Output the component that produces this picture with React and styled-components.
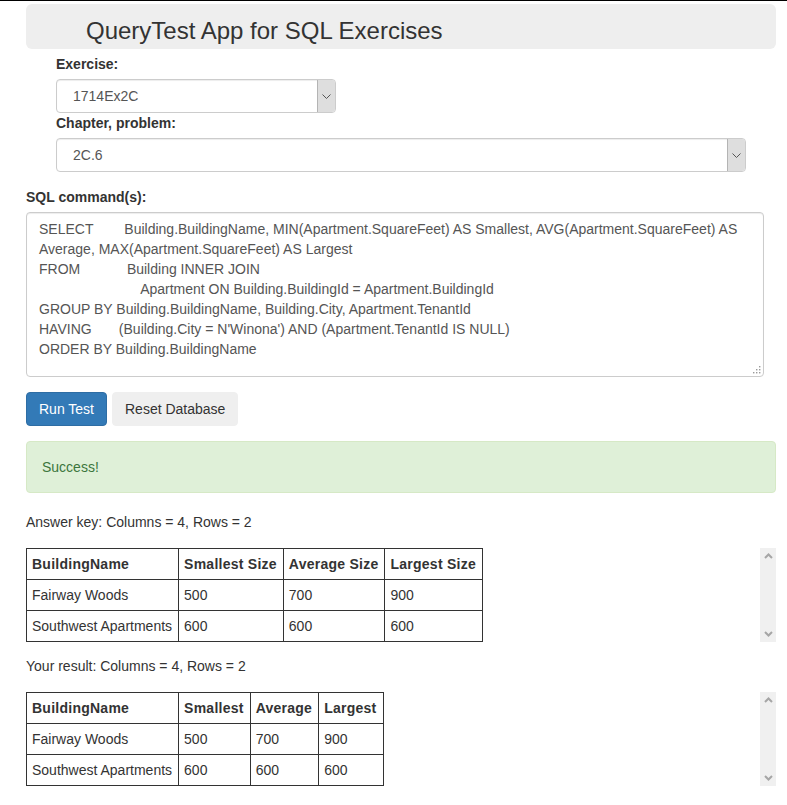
import React from "react";
import styled, { createGlobalStyle } from "styled-components";

const GlobalStyle = createGlobalStyle`
  html, body {
    margin: 0;
    padding: 0;
    background: #fff;
  }
  body {
    font-family: "Liberation Sans", Arial, sans-serif;
    font-size: 14px;
    line-height: 20px;
    color: #333;
    border-top: 1px solid #000;
  }
`;

const sql = `SELECT        Building.BuildingName, MIN(Apartment.SquareFeet) AS Smallest, AVG(Apartment.SquareFeet) AS Average, MAX(Apartment.SquareFeet) AS Largest
FROM            Building INNER JOIN
                          Apartment ON Building.BuildingId = Apartment.BuildingId
GROUP BY Building.BuildingName, Building.City, Apartment.TenantId
HAVING       (Building.City = N'Winona') AND (Apartment.TenantId IS NULL)
ORDER BY Building.BuildingName`;

const answerKey = {
  columns: ["BuildingName", "Smallest Size", "Average Size", "Largest Size"],
  rows: [
    ["Fairway Woods", "500", "700", "900"],
    ["Southwest Apartments", "600", "600", "600"],
  ],
};

const yourResult = {
  columns: ["BuildingName", "Smallest", "Average", "Largest"],
  rows: [
    ["Fairway Woods", "500", "700", "900"],
    ["Southwest Apartments", "600", "600", "600"],
  ],
};

function Chevron({ up }) {
  return (
    <svg width="9" height="6" viewBox="0 0 9 6">
      <polyline
        points={up ? "1,5 4.5,1.5 8,5" : "1,1 4.5,4.5 8,1"}
        fill="none"
        stroke="#a6a6a6"
        strokeWidth="2"
      />
    </svg>
  );
}

function Select({ value, width }) {
  return (
    <SelectBox $width={width}>
      <SelectValue>{value}</SelectValue>
      <ArrowBox>
        <svg width="9" height="5" viewBox="0 0 9 5">
          <polyline points="0.5,0.5 4.5,4.5 8.5,0.5" fill="none" stroke="#555" strokeWidth="1" />
        </svg>
      </ArrowBox>
    </SelectBox>
  );
}

function ResultTable({ data }) {
  return (
    <TableScroll>
      <TableArea>
        <Table>
          <thead>
            <tr>
              {data.columns.map((c) => (
                <Th key={c}>{c}</Th>
              ))}
            </tr>
          </thead>
          <tbody>
            {data.rows.map((r, i) => (
              <tr key={i}>
                {r.map((v, j) => (
                  <Td key={j}>{v}</Td>
                ))}
              </tr>
            ))}
          </tbody>
        </Table>
      </TableArea>
      <ScrollBar>
        <Chevron up />
        <Chevron />
      </ScrollBar>
    </TableScroll>
  );
}

export default function App() {
  return (
    <>
      <GlobalStyle />
      <Page>
        <Jumbotron>
          <Title>QueryTest App for SQL Exercises</Title>
        </Jumbotron>

        <Indented>
          <Label>Exercise:</Label>
          <Select value="1714Ex2C" width="280px" />
          <Label $top="0px">Chapter, problem:</Label>
          <Select value="2C.6" width="690px" />
        </Indented>

        <Label $top="15px">SQL command(s):</Label>
        <EditorWrap>
          <SqlArea readOnly value={sql} spellCheck={false} />
          <Grip>
            <svg width="9" height="9" viewBox="0 0 9 9">
              <rect x="7" y="1" width="1.4" height="1.4" fill="#9a9a9a" />
              <rect x="4" y="4" width="1.4" height="1.4" fill="#9a9a9a" />
              <rect x="7" y="4" width="1.4" height="1.4" fill="#9a9a9a" />
              <rect x="1" y="7" width="1.4" height="1.4" fill="#9a9a9a" />
              <rect x="4" y="7" width="1.4" height="1.4" fill="#9a9a9a" />
              <rect x="7" y="7" width="1.4" height="1.4" fill="#9a9a9a" />
            </svg>
          </Grip>
        </EditorWrap>

        <ButtonRow>
          <Button $primary>Run Test</Button>
          <Button>Reset Database</Button>
        </ButtonRow>

        <Alert>Success!</Alert>

        <Caption>Answer key: Columns = 4, Rows = 2</Caption>
        <ResultTable data={answerKey} />

        <Caption $top="14px">Your result: Columns = 4, Rows = 2</Caption>
        <ResultTable data={yourResult} />
      </Page>
    </>
  );
}

const Page = styled.div`
  width: 750px;
  margin-left: 26px;
  padding-top: 3px;
  padding-bottom: 20px;
`;

const Jumbotron = styled.div`
  background: #eee;
  border-radius: 6px;
  height: 45px;
  display: flex;
  align-items: center;
  padding-left: 60px;
`;

const Title = styled.h1`
  margin: 0;
  font-size: 24px;
  font-weight: 400;
  line-height: 28px;
  color: #333;
  padding-top: 9px;
`;

const Indented = styled.div`
  padding-left: 30px;
  padding-top: 5px;
`;

const Label = styled.div`
  font-weight: 700;
  margin-top: ${(p) => p.$top || "0"};
  margin-bottom: 5px;
  height: 20px;
`;

const SelectBox = styled.div`
  width: ${(p) => p.$width};
  height: 34px;
  box-sizing: border-box;
  border: 1px solid #ccc;
  border-radius: 4px;
  display: flex;
  align-items: stretch;
  background: #fff;
  box-shadow: inset 0 1px 1px rgba(0, 0, 0, 0.075);
`;

const SelectValue = styled.div`
  flex: 1;
  display: flex;
  align-items: center;
  padding-left: 16px;
  color: #555;
`;

const ArrowBox = styled.div`
  width: 17px;
  background: #dedede;
  border-left: 1px solid #b4b4b4;
  border-radius: 0 3px 3px 0;
  display: flex;
  align-items: center;
  justify-content: center;
`;

const EditorWrap = styled.div`
  position: relative;
  width: 738px;
`;

const SqlArea = styled.textarea`
  display: block;
  width: 738px;
  height: 165px;
  box-sizing: border-box;
  padding: 6px 12px;
  border: 1px solid #ccc;
  border-radius: 4px;
  font-family: "Liberation Sans", Arial, sans-serif;
  font-size: 14px;
  line-height: 20px;
  color: #555;
  resize: none;
  overflow: hidden;
  outline: none;
  box-shadow: inset 0 1px 1px rgba(0, 0, 0, 0.075);
`;

const Grip = styled.div`
  position: absolute;
  right: 3px;
  bottom: 3px;
  line-height: 0;
`;

const ButtonRow = styled.div`
  display: flex;
  gap: 5px;
  margin-top: 15px;
`;

const Button = styled.button`
  font-family: "Liberation Sans", Arial, sans-serif;
  font-size: 14px;
  line-height: 20px;
  height: 34px;
  padding: 6px 12px;
  border-radius: 4px;
  border: 1px solid ${(p) => (p.$primary ? "#2e6da4" : "#efefef")};
  background: ${(p) => (p.$primary ? "#337ab7" : "#efefef")};
  color: ${(p) => (p.$primary ? "#fff" : "#333")};
`;

const Alert = styled.div`
  margin-top: 15px;
  padding: 15px;
  background: #dff0d8;
  border: 1px solid #d6e9c6;
  border-radius: 4px;
  color: #3c763d;
`;

const Caption = styled.div`
  margin-top: ${(p) => p.$top || "19px"};
  margin-bottom: 16px;
`;

const TableScroll = styled.div`
  display: flex;
  width: 750px;
  height: 94px;
`;

const TableArea = styled.div`
  flex: 1;
`;

const Table = styled.table`
  border-collapse: collapse;
  border: 1px solid #333;
`;

const Th = styled.th`
  border: 1px solid #333;
  padding: 5px 6px 5px 5px;
  text-align: left;
  font-weight: 700;
  letter-spacing: 0.25px;
  white-space: nowrap;
  height: 20px;
`;

const Td = styled.td`
  border: 1px solid #333;
  padding: 5px 6px 5px 5px;
  white-space: nowrap;
  height: 20px;
`;

const ScrollBar = styled.div`
  width: 16px;
  background: #f0f0f0;
  display: flex;
  flex-direction: column;
  justify-content: space-between;
  align-items: center;
  padding: 5px 0;
  box-sizing: border-box;
`;
